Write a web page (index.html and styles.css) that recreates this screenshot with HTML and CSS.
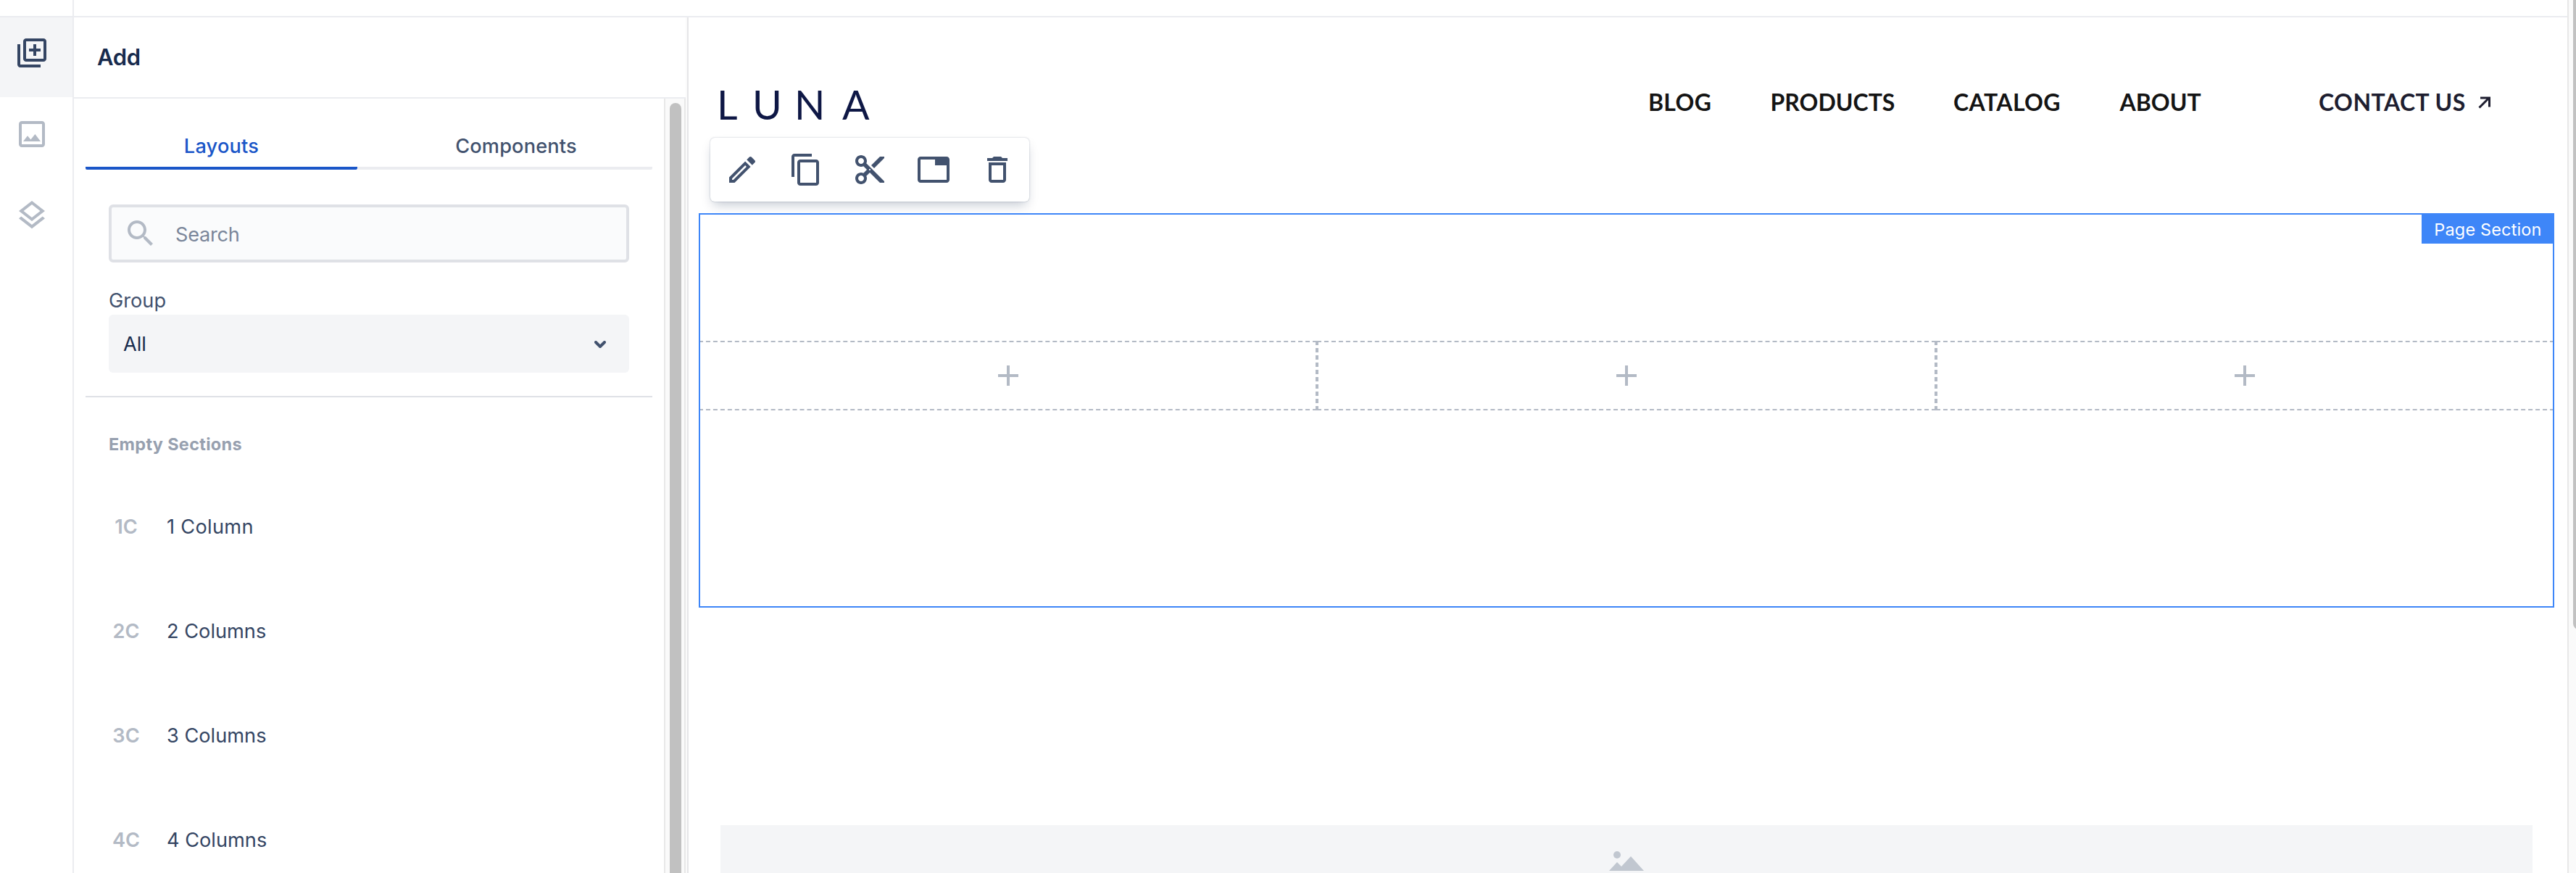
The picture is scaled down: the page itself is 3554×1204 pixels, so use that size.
FILE: index.html
```html
<!DOCTYPE html>
<html lang="en">
<head>
<meta charset="utf-8">
<title>Page editor</title>
<link rel="stylesheet" href="styles.css">
</head>
<body>
<div class="app">
  <div class="main">
    <div class="topbar"><div class="topbar-rail"></div></div>
    <div class="workspace">
      <nav class="rail">
        <a class="rail-item active"><svg class="icon" viewBox="0 0 24 24"><path d="M4 6H2v14c0 1.1.9 2 2 2h14v-2H4V6zm16-4H8c-1.1 0-2 .9-2 2v12c0 1.1.9 2 2 2h12c1.1 0 2-.9 2-2V4c0-1.1-.9-2-2-2zm0 14H8V4h12v12zm-7-2h2v-3h3V9h-3V6h-2v3h-3v2h3z"/></svg></a>
        <a class="rail-item"><svg class="icon" viewBox="0 0 24 24"><path d="M19 3H5c-1.100 0-2 .9-2 2v14c0 1.100.9 2 2 2h14c1.100 0 2-.9 2-2V5c0-1.100-.9-2-2-2zm0 16H5V5h14v14zM6 17l3-3.900 2.200 2.600L14.200 12 18 17z"/></svg></a>
        <a class="rail-item"><svg class="icon" viewBox="0 0 24 24"><path d="M11.990 18.540l-7.370-5.730L3 14.070l9 7 9-7-1.630-1.270-7.380 5.740zM12 16l7.360-5.730L21 9l-9-7-9 7 1.630 1.270L12 16zm0-11.470L17.740 9 12 13.470 6.260 9 12 4.530z"/></svg></a>
      </nav>
      <aside class="panel">
        <header class="panel-header">Add</header>
        <div class="panel-body">
          <div class="panel-content">
            <div class="tabs">
              <div class="tab selected"><span class="t-layouts">Layouts</span></div>
              <div class="tab"><span class="t-components">Components</span></div>
            </div>
            <div class="filters">
              <div class="search">
                <svg class="icon" viewBox="0 0 24 24"><path d="M15.500 14h-.79l-.28-.27C15.410 12.590 16 11.110 16 9.500 16 5.910 13.090 3 9.500 3S3 5.910 3 9.500 5.910 16 9.500 16c1.610 0 3.090-.59 4.230-1.570l.27.28v.79l5 4.990L20.490 19l-4.990-5zm-6 0C7.010 14 5 11.990 5 9.500S7.010 5 9.500 5 14 7.010 14 9.500 11.990 14 9.500 14z"/></svg>
                <span class="t-search">Search</span>
              </div>
              <div class="label"><span class="t-group">Group</span></div>
              <div class="select"><span class="t-all">All</span><svg class="chevron" viewBox="0 0 16 10"><path d="M2 2l6 6 6-6"/></svg></div>
            </div>
            <div class="list">
              <div class="list-title">Empty Sections</div>
              <div class="list-item"><span class="code">1C</span><span class="name one">1 Column</span></div>
              <div class="list-item"><span class="code">2C</span><span class="name">2 Columns</span></div>
              <div class="list-item"><span class="code">3C</span><span class="name">3 Columns</span></div>
              <div class="list-item"><span class="code">4C</span><span class="name">4 Columns</span></div>
            </div>
          </div>
          <div class="panel-scroll"><div class="panel-thumb"></div></div>
        </div>
      </aside>
      <div class="gutter"></div>
      <main class="canvas">
        <header class="site-header">
          <div class="logo"><span>L</span><span>U</span><span>N</span><span>A</span></div>
          <nav class="site-nav">
            <a class="n-blog">BLOG</a><a class="n-products">PRODUCTS</a><a class="n-catalog">CATALOG</a><a>ABOUT</a>
            <a class="n-contact">CONTACT US</a><svg class="arrow" viewBox="0 0 18 17"><path d="M1.500 15.500L15 2M3 2H15.500V14.500"/></svg>
          </nav>
        </header>
        <section class="section">
          <div class="toolbar">
            <svg class="icon" viewBox="0 0 24 24"><path d="M14.060 9.020l.92.92L5.920 19H5v-.92l9.060-9.060M17.660 3c-.25 0-.51.1-.7.29l-1.830 1.830 3.750 3.750 1.830-1.830c.39-.39.39-1.020 0-1.410l-2.340-2.340c-.2-.2-.45-.29-.71-.29zm-3.600 3.190L3 17.250V21h3.750L17.810 9.940l-3.750-3.750z"/></svg>
            <svg class="icon" viewBox="0 0 24 24"><path d="M16 1H4c-1.100 0-2 .9-2 2v14h2V3h12V1zm3 4H8c-1.100 0-2 .9-2 2v14c0 1.100.9 2 2 2h11c1.100 0 2-.9 2-2V7c0-1.100-.9-2-2-2zm0 16H8V7h11v14z"/></svg>
            <svg class="icon" viewBox="0 0 24 24"><path d="M9.640 7.640c.23-.5.36-1.050.36-1.640 0-2.210-1.790-4-4-4S2 3.790 2 6s1.790 4 4 4c.59 0 1.140-.13 1.640-.36L10 12l-2.360 2.360C7.140 14.130 6.590 14 6 14c-2.210 0-4 1.790-4 4s1.790 4 4 4 4-1.790 4-4c0-.59-.13-1.140-.36-1.640L12 14l7 7h3v-1L9.640 7.640zM6 8c-1.100 0-2-.89-2-2s.9-2 2-2 2 .89 2 2-.9 2-2 2zm0 12c-1.100 0-2-.89-2-2s.9-2 2-2 2 .89 2 2-.9 2-2 2zm6-7.500c-.28 0-.5-.22-.5-.5s.22-.5.5-.5.5.22.5.5-.22.5-.5.5zM19 3l-6 6 2 2 7-7V3z"/></svg>
            <svg class="icon" viewBox="0 0 24 24"><path d="M21 3H3c-1.100 0-2 .9-2 2v14c0 1.100.9 2 2 2h18c1.100 0 2-.9 2-2V5c0-1.100-.9-2-2-2zm0 16H3V5h10v4h8v10z"/></svg>
            <svg class="icon" viewBox="0 0 24 24"><path d="M16 9v10H8V9h8m-1.500-6h-5l-1 1H5v2h14V4h-3.500l-1-1zM18 7H6v12c0 1.100.9 2 2 2h8c1.100 0 2-.9 2-2V7z"/></svg>
          </div>
          <div class="badge"><span>Page Section</span></div>
          <div class="columns">
            <div class="column"><svg class="plus" viewBox="0 0 28 28"><path d="M14 0v28M0 14h28"/></svg></div>
            <div class="column"><svg class="plus" viewBox="0 0 28 28"><path d="M14 0v28M0 14h28"/></svg></div>
            <div class="column"><svg class="plus" viewBox="0 0 28 28"><path d="M14 0v28M0 14h28"/></svg></div>
          </div>
        </section>
        <div class="image-block"><svg class="picture" viewBox="0 0 48 27"><circle cx="11" cy="5" r="5"/><path d="M0 27L11 15l6 6L30 7l18 20z"/></svg></div>
      </main>
    </div>
  </div>
  <div class="page-scroll"><div class="page-thumb"></div></div>
</div>
</body>
</html>
```
FILE: styles.css
```css
* { box-sizing: border-box; }
body {
  margin: 0;
  background: #fff;
  color: #344563;
  font: 27.200px/40px Inter, "Liberation Sans", sans-serif;
  overflow: hidden;
}
svg { display: block; flex: none; }
.icon { width: 48px; height: 48px; fill: currentColor; }

.app { display: flex; width: 3554px; height: 1204px; overflow: hidden; }
.main { display: flex; flex-direction: column; width: 3542px; flex: none; }
.topbar { height: 24px; border-bottom: 2px solid #ebecf0; }
.topbar-rail { width: 102px; height: 24px; border-right: 2px solid #ebecf0; }
.workspace { display: flex; height: 1180px; }

.rail { width: 102px; flex: none; border-right: 2px solid #ebecf0; }
.rail-item { display: block; height: 110px; margin-bottom: 2px; padding: 25px 20px 0; color: #b3bac5; }
.rail-item.active { background: #f4f5f7; color: #344563; }

.panel { display: flex; flex-direction: column; width: 844px; flex: none; }
.panel-header {
  flex: none;
  height: 112px;
  padding: 35px 0 0 32px;
  border-bottom: 2px solid #ebecf0;
  color: #172b4d;
  font-size: 31px;
  font-weight: 600;
  letter-spacing: -.3px;
}
.panel-body { display: flex; flex: 1; min-height: 0; overflow: hidden; }
.panel-content { width: 814px; flex: none; padding: 0 16px; }
.panel-scroll { width: 30px; padding: 6px; background: #fafafa; border: solid #e8e8e8; border-width: 0 2px; }
.panel-thumb { width: 16px; height: 1100px; border-radius: 8px; background: #c1c1c1; }
.gutter { width: 4px; flex: none; background: linear-gradient(90deg, #fafafa 2px, #e6e6e8 2px); }

.tabs { display: grid; grid-template-columns: 375px 407px; height: 98px; }
.tab {
  padding-top: 46px;
  border-bottom: 4px solid #ebecf0;
  border-radius: 2px;
  text-align: center;
  font-weight: 500;
  color: #42526e;
}
.tab.selected { border-color: #1a56c8; color: #1a56c8; }
.t-layouts { letter-spacing: .2px; }
.t-components { margin-left: 31px; letter-spacing: .15px; }

.filters { padding: 48px 32px 32px; border-bottom: 2px solid #dfe1e6; }
.search {
  display: flex;
  height: 80px;
  padding: 12px 16px;
  gap: 24px;
  border: 4px solid #dfe1e6;
  border-radius: 6px;
  background: #fafbfc;
  color: #7a869a;
}
.search .icon { color: #b3bac5; }
.t-search { padding-top: 6px; letter-spacing: -.3px; }
.label { height: 72px; padding-top: 33px; color: #42526e; }
.select {
  display: flex;
  align-items: center;
  justify-content: space-between;
  height: 80px;
  padding: 0 32px 0 20px;
  border-radius: 6px;
  background: #f4f5f7;
  color: #172b4d;
}
.t-all { padding-top: 2px; }
.chevron { width: 16px; height: 10px; margin-top: 2px; fill: none; stroke: #42526e; stroke-width: 4; stroke-linecap: round; stroke-linejoin: round; }

.list { padding: 45px 32px 0; }
.list-title { height: 62px; color: #97a0af; font-size: 23.500px; font-weight: 700; letter-spacing: .3px; }
.list-item { display: flex; height: 144px; align-items: center; }
.code { width: 48px; text-align: center; font-weight: 600; color: #b3bac5; }
.name { margin-left: 32px; }
.name.one { letter-spacing: .3px; }

.canvas { flex: 1; padding-left: 14px; }
.site-header { display: flex; height: 270px; padding: 90px 0 0 25px; }
.logo {
  display: grid;
  grid-template-columns: 49px 58px 66px 1112px;
  width: 1285px;
  flex: none;
  font: 55.500px/60px Lato, sans-serif;
  color: #0e1745;
}
.site-nav {
  display: grid;
  grid-template-columns: 168.500px 252.500px 229.500px 274.500px 220px 18px;
  height: 53px;
  align-items: center;
  font: 700 32px/40px Lato, sans-serif;
  color: #141414;
}
.n-blog { letter-spacing: .3px; }
.n-catalog { letter-spacing: .4px; }
.n-contact { letter-spacing: .45px; color: #1e1e30; }
.arrow { width: 18px; height: 17px; margin-top: 2px; fill: none; stroke: #1e1e30; stroke-width: 3; }

.section { position: relative; width: 2560px; height: 544px; padding-top: 176px; }
.section::after { content: ""; position: absolute; inset: 0; border: 2px solid #3e86f8; }
.toolbar {
  position: absolute;
  left: 16px;
  top: -104px;
  display: flex;
  gap: 40px;
  width: 440px;
  height: 88px;
  padding: 20px;
  border-radius: 6px;
  background: #fff;
  color: #42526e;
  box-shadow: 0 8px 16px -4px rgba(9, 30, 66, .25), 0 0 2px rgba(9, 30, 66, .31);
}
.badge {
  position: absolute;
  right: 0;
  top: 0;
  width: 183px;
  height: 42px;
  background: #3e86f8;
  color: #fff;
  font-size: 23.500px;
  line-height: 45px;
  letter-spacing: .15px;
  text-align: center;
}
.columns { display: grid; grid-template-columns: repeat(3, 1fr); height: 96px; }
.column { display: flex; align-items: center; justify-content: center; border: 2px dashed #b3bac5; }
.plus { width: 28px; height: 28px; stroke: #b3bac5; stroke-width: 4; }
.image-block { display: flex; justify-content: center; width: 2500px; height: 66px; margin: 300px 0 0 30px; padding-top: 36px; background: #f4f5f7; }
.picture { width: 48px; height: 27px; fill: #c1c7d0; }

.page-scroll { width: 12px; flex: none; padding-left: 6px; background: #fafafa; border-left: 2px solid #e8e8e8; overflow: hidden; }
.page-thumb { width: 16px; height: 868px; border-radius: 0 0 8px 8px; background: #c1c1c1; }
```
